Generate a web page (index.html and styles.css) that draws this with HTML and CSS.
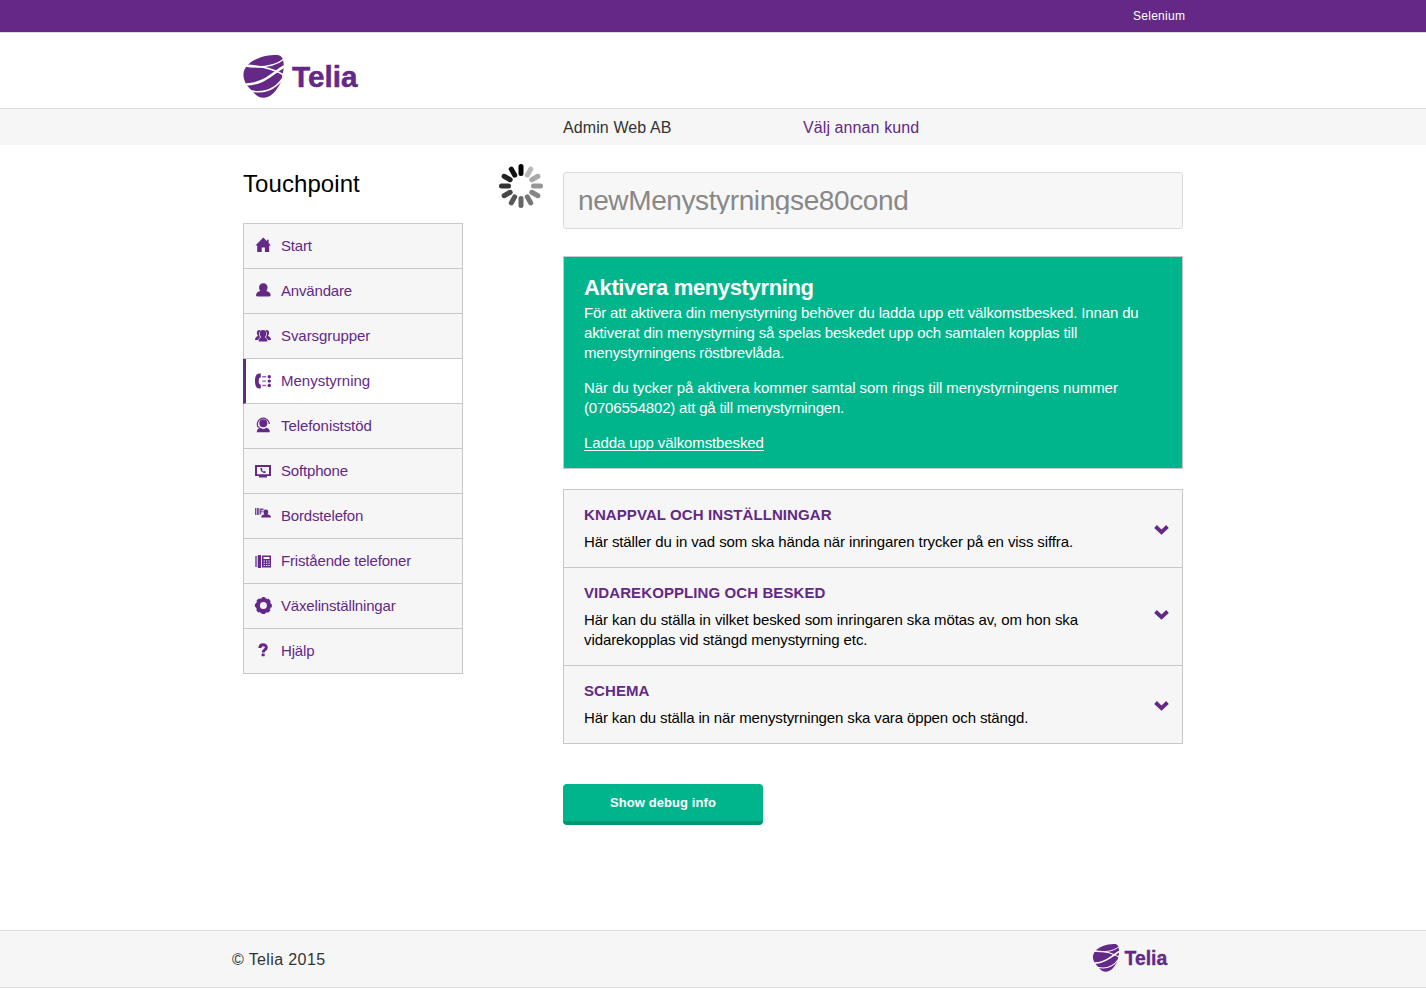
FILE: index.html
```html
<!DOCTYPE html>
<html lang="sv">
<head>
<meta charset="utf-8">
<title>Telia Touchpoint</title>
<link rel="stylesheet" href="styles.css">
</head>
<body>
<svg class="defs" width="0" height="0">
  <symbol id="logo" viewBox="0 0 345 130" overflow="visible">
    <path fill="#642887" d="M0 62C0 44 10 29 30 17C52 4 80 0 98 0C114 0 120 8 121 22C123 34 122 46 118 58C116 76 114 84 104 98C96 112 80 129 61 129C46 129 38 122 28 110C12 96 1 80 0 62Z"/>
    <g fill="none" stroke="#fff">
      <path stroke-width="4.500" d="M4 33C50 40 92 36 123 12"/>
      <path stroke-width="5" d="M8 31C50 33 92 40 124 62"/>
      <path stroke-width="7.500" d="M8 89C55 88 78 64 100 50C108 44 116 38 125 34"/>
      <path stroke-width="5" d="M20 108C60 118 96 104 118 72"/>
    </g>
    <text class="logo-text" x="147" y="97" textLength="198" lengthAdjust="spacingAndGlyphs">Telia</text>
  </symbol>
  <symbol id="chevron" viewBox="0 0 15 10"><path d="M1.500 1.500L7.500 7.200L13.500 1.500" fill="none" stroke="#642887" stroke-width="3.800"/></symbol>
</svg>

<div class="topbar"><div class="wrap topbar-in">Selenium</div></div>
<header class="header"><div class="wrap"><svg class="logo"><use href="#logo"/></svg></div></header>
<div class="subbar"><div class="wrap subbar-in"><span class="customer">Admin Web AB</span><a class="switch">Välj annan kund</a></div></div>

<div class="wrap main">
  <aside class="side">
    <h1 class="side-title">Touchpoint</h1>
    <nav class="menu">
      <a class="item"><svg class="ico" viewBox="0 0 18 18"><path d="M9.300 .5L1.500 8.600H3.200V15H7.700V10.500H10.900V15H15.200V8.600H17L14.600 6V2.800H12.900V4.200Z"/></svg><span>Start</span></a>
      <a class="item"><svg class="ico" viewBox="0 0 18 18"><path d="M9.300 1.300C6.600 1.300 5.100 3.200 5.100 5.500C5.100 7.300 5.700 8.300 6.400 9.100C3.800 9.700 2 11 2 13.300Q2 14.600 4 14.600H14.800Q16.700 14.600 16.700 13.300C16.700 11 14.800 9.700 12.200 9.100C12.900 8.300 13.500 7.300 13.500 5.500C13.500 3.200 12 1.300 9.300 1.300Z"/></svg><span>Användare</span></a>
      <a class="item"><svg class="ico" viewBox="0 0 18 18"><path d="M5.500 3C2.500 3 2.200 6.500 4 9C2.200 9.600 1 10.800 1 13H4.200C4.500 11.500 5.500 10.700 6.200 10.200C4.800 8.500 4.500 5.500 6.800 3.600ZM12.500 3C15.500 3 15.800 6.500 14 9C15.800 9.600 17 10.800 17 13H13.800C13.500 11.500 12.500 10.700 11.800 10.200C13.200 8.500 13.500 5.500 11.200 3.600Z"/><path d="M9 3C6.700 3 5.800 4.500 5.800 6.500C5.800 8.200 6.500 9.500 7.200 10.200C5.500 11 4.600 12 4.600 14.500H13.400C13.400 12 12.500 11 10.800 10.200C11.500 9.500 12.200 8.200 12.200 6.500C12.200 4.500 11.300 3 9 3Z"/></svg><span>Svarsgrupper</span></a>
      <a class="item active"><svg class="ico" viewBox="0 0 18 18"><path d="M5.500 1.500C2 1.500 1 5 1 9S2 16.500 5.500 16.500H6.800V12.700L5.300 12C4.500 10 4.500 8 5.300 6L6.800 5.300V1.500Z"/><path d="M8.200 4h4v1.400h-4zM8.200 8.400h4v1.400h-4zM8.200 12.800h4v1.400h-4z" opacity=".7"/><circle cx="15.300" cy="4.700" r="1.700"/><circle cx="15.300" cy="9.100" r="1.700"/><circle cx="15.300" cy="13.500" r="1.700"/></svg><span>Menystyrning</span></a>
      <a class="item"><svg class="ico" viewBox="0 0 18 18"><circle cx="9.300" cy="6.300" r="4"/><path d="M4.300 10.500A6 6 0 1 1 15.200 6V7" fill="none" stroke="#642887" stroke-width="1.200"/><path d="M2.800 15.300C2.800 12.500 4.300 10.900 6.200 10.900L9.700 12.300L12.200 10.700C14.800 11.200 15.800 12.500 15.800 15.300Z"/><path d="M4.500 9.200C5 11.700 7.500 13.200 10 12.300" fill="none" stroke="#642887"/></svg><span>Telefoniststöd</span></a>
      <a class="item"><svg class="ico" viewBox="0 0 18 18"><path fill-rule="evenodd" d="M1 3H17V14H13V15.500H5V14H1ZM3 5V12.300H15V5Z"/><path d="M6.500 5.800C6 9 8.500 11.500 11.700 11L11.500 9.300L10 9L9.200 9.600L8 8.200L8.500 7.500L8 6Z"/></svg><span>Softphone</span></a>
      <a class="item"><svg class="ico" viewBox="0 0 18 18"><path d="M1 1H2.200V8H1ZM2.800 1H4.800V8H2.800ZM5.500 1.500H9.500V3.300H7.200V4.300H9V5.300H7.200V7.500H5.500Z" opacity=".85"/><path d="M11.800 2.500C10 2.500 9.200 3.800 9.500 5.300C9.600 6.200 10 6.800 10.400 7.200C8.500 7.800 7.200 8.400 7.200 10.500H17C17 8.400 15.500 7.800 13.400 7.200C14 6.500 14.300 5.500 14.200 4.700C14.100 3.400 13.300 2.500 11.800 2.500Z"/></svg><span>Bordstelefon</span></a>
      <a class="item"><svg class="ico" viewBox="0 0 18 18"><path d="M1 4H3V15H1Z" opacity=".65"/><rect x="3.700" y="3" width="3.400" height="13" rx=".8"/><path fill-rule="evenodd" d="M8 3.500H17V15.500H8ZM9.500 5V7H15.500V5ZM9.600 8.600V9.600H10.900V8.600ZM12 8.600V9.600H13.300V8.600ZM14.400 8.600V9.600H15.700V8.600ZM9.600 10.800V11.800H10.900V10.800ZM12 10.800V11.800H13.300V10.800ZM14.400 10.800V11.800H15.700V10.800ZM9.600 13V14H10.900V13ZM12 13V14H13.300V13ZM14.400 13V14H15.700V13Z"/></svg><span>Fristående telefoner</span></a>
      <a class="item"><svg class="ico" viewBox="0 0 18 18"><circle cx="9.400" cy="8.600" r="5.600" fill="none" stroke="#642887" stroke-width="4.200"/><circle cx="9.400" cy="8.600" r="7.700" fill="none" stroke="#642887" stroke-width="1.600" stroke-dasharray="3.600 2.448" stroke-dashoffset="1.800"/></svg><span>Växelinställningar</span></a>
      <a class="item"><svg class="ico" viewBox="0 0 18 18"><path d="M5.900 6C5.900 1.800 12.300 1.800 12.300 5.500C12.300 8 9.200 7.900 9.200 10.500" fill="none" stroke="#642887" stroke-width="3"/><rect x="7.600" y="11.400" width="3.100" height="2.900" rx=".6"/></svg><span>Hjälp</span></a>
    </nav>
  </aside>

  <div class="loading">
    <svg class="spinner" viewBox="-22 -22 44 44">
      <g stroke-width="5" stroke-linecap="round">
        <path d="M0-12.500V-19.500" stroke="#000"/>
        <path d="M0-12.500V-19.500" stroke="#b8b8b8" transform="rotate(30)"/>
        <path d="M0-12.500V-19.500" stroke="#a8a8a8" transform="rotate(60)"/>
        <path d="M0-12.500V-19.500" stroke="#969696" transform="rotate(90)"/>
        <path d="M0-12.500V-19.500" stroke="#868686" transform="rotate(120)"/>
        <path d="M0-12.500V-19.500" stroke="#767676" transform="rotate(150)"/>
        <path d="M0-12.500V-19.500" stroke="#676767" transform="rotate(180)"/>
        <path d="M0-12.500V-19.500" stroke="#575757" transform="rotate(210)"/>
        <path d="M0-12.500V-19.500" stroke="#474747" transform="rotate(240)"/>
        <path d="M0-12.500V-19.500" stroke="#333" transform="rotate(270)"/>
        <path d="M0-12.500V-19.500" stroke="#222" transform="rotate(300)"/>
        <path d="M0-12.500V-19.500" stroke="#111" transform="rotate(330)"/>
      </g>
    </svg>
  </div>

  <main class="content">
    <div class="name-field"><div class="name-value">newMenystyrningse80cond</div></div>
    <section class="notice">
      <h2 class="notice-title">Aktivera menystyrning</h2>
      <p class="intro">För att aktivera din menystyrning behöver du ladda upp ett välkomstbesked. Innan du<br>aktiverat din menystyrning så spelas beskedet upp och samtalen kopplas till<br>menystyrningens röstbrevlåda.</p>
      <p class="number">När du tycker på aktivera kommer samtal som rings till menystyrningens nummer<br><span class="number-end">(0706554802) att gå till menystyrningen.</span></p>
      <p><a class="upload">Ladda upp välkomstbesked</a></p>
    </section>
    <section class="accordion">
      <div class="row"><div><h3>KNAPPVAL OCH INSTÄLLNINGAR</h3><p>Här ställer du in vad som ska hända när inringaren trycker på en viss siffra.</p></div><svg class="chev"><use href="#chevron"/></svg></div>
      <div class="row tall"><div><h3>VIDAREKOPPLING OCH BESKED</h3><p>Här kan du ställa in vilket besked som inringaren ska mötas av, om hon ska<br>vidarekopplas vid stängd menystyrning etc.</p></div><svg class="chev"><use href="#chevron"/></svg></div>
      <div class="row"><div><h3>SCHEMA</h3><p>Här kan du ställa in när menystyrningen ska vara öppen och stängd.</p></div><svg class="chev"><use href="#chevron"/></svg></div>
    </section>
    <button class="debug">Show debug info</button>
  </main>
</div>

<footer class="footer"><div class="footer-in"><span class="copyright">© Telia 2015</span><svg class="logo-small"><use href="#logo"/></svg></div></footer>
</body>
</html>
```
FILE: styles.css
```css
* { box-sizing: border-box; }
body {
  margin: 0;
  height: 988px;
  display: flex;
  flex-direction: column;
  overflow: hidden;
  background: #fff;
  color: #000;
  font: 15px/20px "Liberation Sans", Arial, sans-serif;
}
h1, h2, h3, p { margin: 0; }
.defs { position: absolute; }
.wrap { width: 940px; margin: 0 auto; }
.logo-text { font: bold 91px "Liberation Sans", Arial, sans-serif; fill: #642887; stroke: #642887; stroke-width: 1.5px; }

.topbar { height: 33px; background: #642887; border-bottom: 1px solid #ddd; }
.topbar-in { padding-top: 6px; padding-left: 890px; font-size: 12px; letter-spacing: .27px; color: #fff; }
.header { height: 76px; padding-top: 22px; border-bottom: 1px solid #d9d9d9; }
.logo { display: block; width: 115px; height: 43px; overflow: visible; }
.subbar { height: 36px; background: #f6f6f6; }
.subbar-in { display: flex; padding: 9px 0 0 320px; font-size: 16px; letter-spacing: .1px; color: #333; }
.customer { width: 240px; }
.switch { color: #642887; }

.main { flex: 1; display: flex; align-items: flex-start; }
.side { width: 220px; padding-top: 24px; }
.side-title { font-weight: normal; font-size: 24px; line-height: 30px; letter-spacing: .07px; }
.menu { margin-top: 24px; border: 1px solid #c8c8c8; border-bottom: 0; letter-spacing: -.17px; }
.item {
  display: flex;
  align-items: center;
  height: 45px;
  padding-left: 10px;
  gap: 9px;
  background: #f6f6f6;
  border-bottom: 1px solid #c8c8c8;
  color: #642887;
}
.item:nth-child(3), .item:nth-child(5) { letter-spacing: -.07px; }
.item.active { background: #fff; margin-left: -1px; padding-left: 8px; border-left: 3px solid #642887; letter-spacing: 0; }
.ico { width: 18px; height: 18px; margin-top: -1px; fill: #642887; }

.loading { width: 100px; padding: 19px 0 0 36px; }
.spinner { display: block; width: 44px; height: 44px; }

.content { width: 620px; padding-top: 27px; }
.name-field { height: 57px; padding: 14px; border: 1px solid #dadada; border-radius: 3px; background: #f7f7f7; }
.name-value { height: 27px; overflow: hidden; font-size: 28px; line-height: 28px; letter-spacing: -.39px; color: #888; }

.notice { height: 213px; margin-top: 27px; padding: 20px; border: 1px solid #c8c8c8; background: #00b58c; color: #fff; }
.notice-title { font-size: 22px; line-height: 22px; margin-bottom: 4px; letter-spacing: -.36px; }
.notice p { margin-bottom: 15px; white-space: nowrap; letter-spacing: -.12px; }
.notice .intro { letter-spacing: -.14px; }
.notice .number { letter-spacing: -.05px; }
.number-end { letter-spacing: -.19px; }
.upload { display: inline-block; height: 16px; line-height: 16px; border-bottom: 1px solid #fff; vertical-align: top; margin-top: 2px; }

.accordion { margin-top: 20px; border: 1px solid #c8c8c8; background: #f6f6f6; }
.row { display: flex; align-items: center; justify-content: space-between; height: 78px; padding: 0 13px 0 20px; border-bottom: 1px solid #c8c8c8; white-space: nowrap; letter-spacing: -.11px; }
.row.tall { height: 98px; letter-spacing: -.08px; }
.row:last-child { height: 77px; border-bottom: 0; letter-spacing: -.13px; }
.row h3 { font-size: 15px; line-height: 20px; margin-bottom: 7px; letter-spacing: .09px; color: #642887; }
.chev { width: 15px; height: 10px; margin-top: 3px; }
.tall .chev { margin-top: -3px; }

.debug {
  display: block;
  width: 200px;
  height: 41px;
  margin-top: 40px;
  padding: 0;
  border: 0;
  border-bottom: 4px solid #009873;
  border-radius: 4px;
  background: #00b58c;
  color: #fff;
  font: bold 13px/20px "Liberation Sans", Arial, sans-serif;
  letter-spacing: .08px;
}

.footer { height: 58px; background: #f6f6f6; border-top: 1px solid #ddd; border-bottom: 1px solid #ddd; }
.footer-in { display: flex; align-items: center; justify-content: space-between; width: 936px; height: 56px; margin-left: 232px; font-size: 16px; color: #333; }
.copyright { padding-top: 2px; letter-spacing: .38px; }
.logo-small { width: 76px; height: 28px; margin-top: -2px; overflow: visible; }
```
